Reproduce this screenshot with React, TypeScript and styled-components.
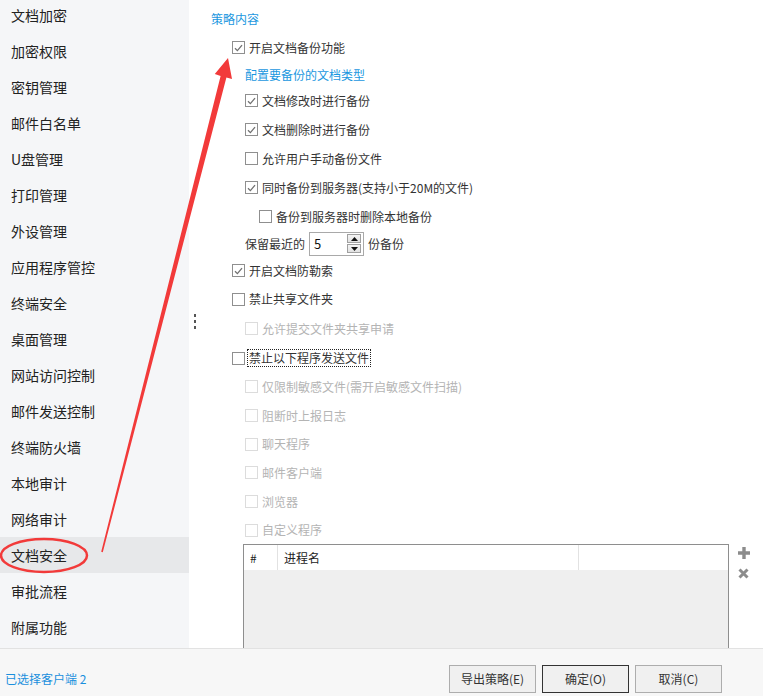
import styled, { createGlobalStyle, css } from 'styled-components';

const GlobalStyle = createGlobalStyle`
  html, body {
    margin: 0;
    padding: 0;
    background: #ffffff;
    overflow: hidden;
  }
  body {
    font-family: "Noto Sans CJK SC", "Noto Sans", "Liberation Sans", sans-serif;
    font-size: 12px;
    color: #333;
  }
`;

const Page = styled.div`
  position: relative;
  width: 763px;
  height: 696px;
  display: grid;
  grid-template-rows: 648px 48px;
  overflow: hidden;
`;

const Main = styled.div`
  display: flex;
  overflow: hidden;
`;

const Sidebar = styled.ul`
  width: 189px;
  flex: none;
  margin: 0;
  padding: 0;
  list-style: none;
  background: #f5f6f8;
  overflow: hidden;
`;

const NavList = styled.div`
  margin-top: -3px;
`;

const NavItem = styled.li<{ $active?: boolean }>`
  height: 36px;
  line-height: 36px;
  padding-left: 11px;
  font-size: 14px;
  color: #222;
  background: ${p => (p.$active ? '#e7e8ea' : 'transparent')};
`;

const Splitter = styled.div`
  width: 12px;
  flex: none;
  display: flex;
  flex-direction: column;
  align-items: center;
  justify-content: center;
  gap: 3px;
  padding-bottom: 6px;
`;

const Dot = styled.span`
  width: 2px;
  height: 3px;
  background: #555;
`;

const Content = styled.div`
  flex: 1;
  padding: 4px 0 0 10px;
  overflow: hidden;
`;

const SectionTitle = styled.div<{ $indent?: number; $h?: number }>`
  height: ${p => p.$h ?? 29}px;
  display: flex;
  align-items: center;
  padding-left: ${p => p.$indent ?? 0}px;
  color: #1a97e0;
  font-size: 12px;
`;

const Row = styled.div<{ $indent: number; $h?: number; $disabled?: boolean }>`
  height: ${p => p.$h ?? 29}px;
  display: flex;
  align-items: center;
  gap: 4px;
  padding-left: ${p => p.$indent}px;
  color: ${p => (p.$disabled ? '#b4b4b4' : '#333')};
  white-space: nowrap;
`;

const Box = styled.span<{ $disabled?: boolean }>`
  width: 13px;
  height: 13px;
  box-sizing: border-box;
  flex: none;
  border: 1px solid ${p => (p.$disabled ? '#dcdcdc' : '#8f8f8f')};
  background: #fff;
  display: flex;
  align-items: center;
  justify-content: center;
`;

const Label = styled.span<{ $focused?: boolean }>`
  line-height: 16px;
  padding: 0 1px;
  border: 1px solid transparent;
  margin-left: -2px;
  ${p =>
    p.$focused &&
    css`
      border: 1px dotted #222;
    `}
`;

const SpinBox = styled.span`
  width: 55px;
  height: 24px;
  box-sizing: border-box;
  border: 1px solid #a9a9a9;
  display: flex;
  align-items: center;
  background: #fff;
`;

const SpinValue = styled.span`
  flex: 1;
  padding-left: 4px;
  font-size: 13px;
  color: #111;
`;

const SpinButtons = styled.span`
  width: 14px;
  height: 19px;
  margin-right: 2px;
  display: flex;
  flex-direction: column;
  gap: 1px;
`;

const SpinButton = styled.span`
  flex: 1;
  box-sizing: border-box;
  border: 1px solid #a0a0a0;
  background: linear-gradient(#f4f4f4, #e2e2e2);
  display: flex;
  align-items: center;
  justify-content: center;
`;

const TableArea = styled.div`
  display: flex;
  padding-left: 32px;
  gap: 9px;
`;

const Table = styled.div`
  width: 486px;
  height: 140px;
  box-sizing: border-box;
  border: 1px solid #8e8e8e;
  background: #efefef;
`;

const HeadRow = styled.div`
  display: grid;
  grid-template-columns: 33px 301px 1fr;
  height: 25px;
  background: #fff;
`;

const HeadCell = styled.div`
  display: flex;
  align-items: center;
  padding-left: 6px;
  color: #222;
  & + & {
    border-left: 1px solid #e2e2e2;
  }
`;

const IconCol = styled.div`
  display: flex;
  flex-direction: column;
  gap: 9px;
  padding-top: 3px;
`;

const Footer = styled.footer`
  border-top: 1px solid #e2e2e2;
  background: #f7f7f7;
  display: flex;
  align-items: center;
  justify-content: space-between;
  padding: 0 41px 0 5px;
`;

const ClientCount = styled.span`
  color: #1a8fdd;
  font-size: 12px;
  padding-top: 11px;
`;

const Buttons = styled.div`
  display: flex;
  gap: 6px;
  padding-top: 12px;
`;

const Button = styled.button<{ $primary?: boolean }>`
  width: 87px;
  height: 28px;
  font-family: inherit;
  font-size: 12px;
  color: #333;
  background: #f0f0f0;
  border: 1px solid ${p => (p.$primary ? '#333' : '#adadad')};
  padding: 0;
`;

const Overlay = styled.svg`
  position: absolute;
  left: 0;
  top: 0;
  pointer-events: none;
`;

const navItems = [
  '文档加密', '加密权限', '密钥管理', '邮件白名单', 'U盘管理', '打印管理', '外设管理',
  '应用程序管控', '终端安全', '桌面管理', '网站访问控制', '邮件发送控制', '终端防火墙',
  '本地审计', '网络审计', '文档安全', '审批流程', '附属功能',
];

type Opt = { label: string; indent: number; checked?: boolean; disabled?: boolean; h?: number; focused?: boolean };

const CheckBox = ({ checked, disabled }: { checked?: boolean; disabled?: boolean }) => (
  <Box $disabled={disabled}>
    {checked && (
      <svg width="9" height="8" viewBox="0 0 9 8">
        <path d="M1 4.2 L3.4 6.6 L8 1.2" fill="none" stroke="#707070" strokeWidth="1.3" />
      </svg>
    )}
  </Box>
);

const Option = ({ label, indent, checked, disabled, h, focused }: Opt) => (
  <Row $indent={indent} $h={h} $disabled={disabled}>
    <CheckBox checked={checked} disabled={disabled} />
    <Label $focused={focused}>{label}</Label>
  </Row>
);

const Arrow = ({ up }: { up?: boolean }) => (
  <svg width="7" height="4" viewBox="0 0 7 4">
    <path d={up ? 'M0 4 L3.5 0 L7 4 Z' : 'M0 0 L3.5 4 L7 0 Z'} fill="#111" />
  </svg>
);

export default function App() {
  return (
    <Page>
      <GlobalStyle />
      <Main>
        <Sidebar>
          <NavList>
            {navItems.map((n, i) => (
              <NavItem key={n} $active={i === 15}>{n}</NavItem>
            ))}
          </NavList>
        </Sidebar>
        <Splitter>
          <Dot />
          <Dot />
          <Dot />
        </Splitter>
        <Content>
          <SectionTitle>策略内容</SectionTitle>
          <Option label="开启文档备份功能" indent={21} checked />
          <SectionTitle $indent={34} $h={24}>配置要备份的文档类型</SectionTitle>
          <Option label="文档修改时进行备份" indent={34} checked />
          <Option label="文档删除时进行备份" indent={34} checked />
          <Option label="允许用户手动备份文件" indent={34} />
          <Option label="同时备份到服务器(支持小于20M的文件)" indent={34} checked />
          <Option label="备份到服务器时删除本地备份" indent={48} />
          <Row $indent={34} $h={25}>
            <span>保留最近的</span>
            <SpinBox>
              <SpinValue>5</SpinValue>
              <SpinButtons>
                <SpinButton><Arrow up /></SpinButton>
                <SpinButton><Arrow /></SpinButton>
              </SpinButtons>
            </SpinBox>
            <span>份备份</span>
          </Row>
          <Option label="开启文档防勒索" indent={21} checked />
          <Option label="禁止共享文件夹" indent={21} h={28} />
          <Option label="允许提交文件夹共享申请" indent={34} disabled h={31} />
          <Option label="禁止以下程序发送文件" indent={21} h={28} focused />
          <Option label="仅限制敏感文件(需开启敏感文件扫描)" indent={34} disabled />
          <Option label="阻断时上报日志" indent={34} disabled />
          <Option label="聊天程序" indent={34} disabled h={28} />
          <Option label="邮件客户端" indent={34} disabled />
          <Option label="浏览器" indent={34} disabled />
          <Option label="自定义程序" indent={34} disabled h={28} />
          <TableArea>
            <Table>
              <HeadRow>
                <HeadCell>#</HeadCell>
                <HeadCell>进程名</HeadCell>
                <HeadCell />
              </HeadRow>
            </Table>
            <IconCol>
              <svg width="12" height="12" viewBox="0 0 12 12">
                <path d="M4.3 0h3.4v4.3H12v3.4H7.7V12H4.3V7.7H0V4.3h4.3z" fill="#8c8c8c" />
              </svg>
              <svg width="11" height="11" viewBox="0 0 11 11">
                <path d="M1.5 1.5 L9.5 9.5 M9.5 1.5 L1.5 9.5" stroke="#8c8c8c" strokeWidth="3" />
              </svg>
            </IconCol>
          </TableArea>
        </Content>
      </Main>
      <Footer>
        <ClientCount>已选择客户端 2</ClientCount>
        <Buttons>
          <Button>导出策略(E)</Button>
          <Button $primary>确定(O)</Button>
          <Button>取消(C)</Button>
        </Buttons>
      </Footer>
      <Overlay width="763" height="696" viewBox="0 0 763 696">
        <ellipse cx="44" cy="555.5" rx="43" ry="16.5" fill="none" stroke="#f23a3a" strokeWidth="2.5" />
        <polygon
          points="228,58 232,79 226.4,77.4 102.8,552.2 101.2,551.8 220.6,75.9 214.8,74"
          fill="#f23a3a"
        />
      </Overlay>
    </Page>
  );
}
